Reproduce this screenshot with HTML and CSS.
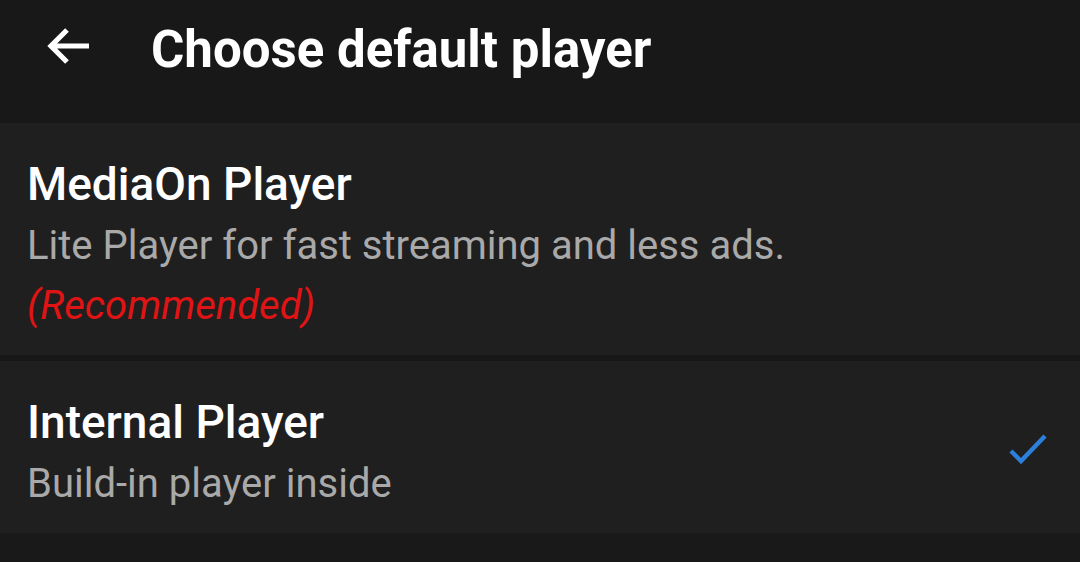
FILE: index.html
```html
<!DOCTYPE html>
<html lang="en">
<head>
    <meta charset="UTF-8">
    <meta name="viewport" content="width=device-width, initial-scale=1.0">
    <title>Choose default player</title>
    <link rel="stylesheet" href="styles.css">
</head>
<body>
    <header class="toolbar">
        <button class="back" aria-label="Back">
            <svg viewBox="0 0 46 42" width="46" height="42"><path d="M44 21H6M22 5L6 21l16 16" fill="none" stroke="#fff" stroke-width="5.2"/></svg>
        </button>
        <h1>Choose default player</h1>
    </header>
    <ul class="players">
        <li class="player">
            <div class="info">
                <div class="name">MediaOn Player</div>
                <div class="desc">Lite Player for fast streaming and less ads.</div>
                <div class="note">(Recommended)</div>
            </div>
        </li>
        <li class="player selected">
            <div class="info">
                <div class="name">Internal Player</div>
                <div class="desc">Build-in player inside</div>
            </div>
            <svg class="check" viewBox="0 0 40 32" width="40" height="32"><polyline points="3,18 13,28 37,3" fill="none" stroke="#2c80dc" stroke-width="4.4"/></svg>
        </li>
    </ul>
</body>
</html>
```

FILE: styles.css
```css
body {
    margin: 0;
    min-height: 100vh;
    background: #191919;
    font-family: 'Roboto', 'Noto Sans', sans-serif;
    color: #fff;
}

.toolbar {
    height: 123px;
    display: flex;
    align-items: center;
    background: #181818;
    padding-bottom: 24px;
    box-sizing: border-box;
}

.back {
    background: none;
    border: none;
    padding: 0;
    margin: 0 60px 7px 45px;
    display: flex;
}

.toolbar h1 {
    margin: 0;
    font-size: 51px;
    font-weight: 700;
}

.players {
    list-style: none;
    margin: 0;
    padding: 0;
}

.player {
    display: flex;
    align-items: center;
    background: #1f1f1f;
    padding: 29px 32px 19px 27px;
    border-bottom: 6px solid #171717;
}

.player:last-child {
    border-bottom: none;
}

.info {
    flex: 1;
}

.check {
    margin-bottom: 6px;
}

.name {
    font-size: 46px;
    font-weight: 500;
    line-height: 64px;
}

.desc {
    font-size: 40px;
    line-height: 60px;
    color: #a9a9a9;
}

.note {
    font-size: 40px;
    line-height: 60px;
    font-style: italic;
    color: #e01414;
}
```
